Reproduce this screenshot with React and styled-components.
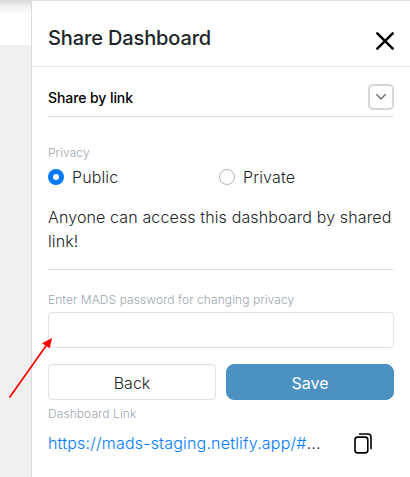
import React from 'react';
import styled, { createGlobalStyle } from 'styled-components';

const GlobalStyle = createGlobalStyle`
  *, *::before, *::after { box-sizing: border-box; }
  body {
    margin: 0;
    overflow: hidden;
    font-family: Inter, 'Liberation Sans', sans-serif;
    font-size: 16px;
    font-weight: 300;
    color: #212529;
  }
`;

const Page = styled.div`
  position: relative;
  display: flex;
  width: 410px;
  height: 477px;
  background: #f0f0f0;
`;

const Backdrop = styled.div`
  width: 31px;
  height: 45px;
  background: linear-gradient(#d9d9d9 0, #ececec 5px, #fafafa 11px, #fff 15px);
`;

const Drawer = styled.aside`
  flex: 1;
  min-width: 0;
  background: #fff;
  border-top: 1px solid #dedede;
  border-left: 1px solid #dcdcdc;
`;

const Header = styled.header`
  display: flex;
  justify-content: space-between;
  height: 66px;
  padding: 22px 15px 0 16px;
  border-bottom: 1px solid #e6e6e6;
`;

const Title = styled.h1`
  margin: 0;
  font-size: 20px;
  line-height: 30px;
  font-weight: 500;
  letter-spacing: -0.13px;
`;

const IconButton = styled.button`
  display: block;
  padding: 0;
  border: 0;
  background: none;
  line-height: 0;
  color: #000;
`;

const CloseButton = styled(IconButton)`
  width: 20px;
  height: 20px;
  margin-top: 8px;
`;

const Content = styled.div`
  padding: 0 16px;
`;

const SectionBar = styled.div`
  display: flex;
  align-items: center;
  justify-content: space-between;
  height: 50px;
  padding-top: 11px;
  border-bottom: 1px solid #dee2e6;
`;

const SectionTitle = styled.h2`
  margin: 2px 0 0;
  font-size: 14px;
  line-height: 20px;
  font-weight: 500;
  letter-spacing: -0.08px;
  color: #000;
`;

const Toggle = styled(IconButton)`
  display: grid;
  place-items: center;
  width: 26px;
  height: 26px;
  margin-bottom: 1px;
  border: 2px solid #d3d8dd;
  border-radius: 5px;
`;

const Label = styled.div`
  font-size: 12px;
  line-height: 18px;
  letter-spacing: 0.08px;
  color: #9ca7b1;
  margin-top: ${({ $top }) => $top || 0}px;
`;

const RadioGroup = styled.div`
  display: grid;
  grid-template-columns: 171px 1fr;
  margin-top: 3px;
`;

const RadioLabel = styled.label`
  display: flex;
  align-items: center;
  gap: 8px;
  line-height: 24px;
  letter-spacing: 0.13px;
`;

const Radio = styled.input`
  appearance: none;
  width: 16px;
  height: 16px;
  margin: 0;
  border: ${({ checked }) => (checked ? '5px solid #007bff' : '1px solid #adb5bd')};
  border-radius: 50%;
  background: #fff;
`;

const Description = styled.p`
  margin: 16px -4px 0 0;
  padding-bottom: 16px;
  line-height: 24px;
  letter-spacing: 0.13px;
`;

const Divider = styled.hr`
  margin: 0;
  border: 0;
  border-top: 1px solid #dfe1e3;
`;

const PasswordInput = styled.input`
  display: block;
  width: 100%;
  height: 36px;
  margin-top: 3px;
  padding: 0 12px;
  border: 1px solid #dee2e6;
  border-radius: 4px;
  background: #fff;
  outline: 0;
`;

const Actions = styled.div`
  display: grid;
  grid-template-columns: 1fr 1fr;
  gap: 10px;
  margin-top: 16px;
`;

const Button = styled.button`
  height: 36px;
  padding: 2px 0 0;
  border: 1px solid ${({ $primary }) => ($primary ? '#4b92c3' : '#dee2e6')};
  border-radius: ${({ $primary }) => ($primary ? 8 : 4)}px;
  background: ${({ $primary }) => ($primary ? '#4b92c3' : '#fff')};
  color: ${({ $primary }) => ($primary ? '#fff' : '#212529')};
  font: ${({ $primary }) => ($primary ? 400 : 300)} 16px Inter, sans-serif;
`;

const LinkRow = styled.div`
  display: flex;
  align-items: center;
  margin-top: 8px;
`;

const LinkText = styled.div`
  width: 306px;
  line-height: 24px;
  letter-spacing: 0.2px;
  white-space: nowrap;
`;

const Anchor = styled.a`
  color: #007bff;
  text-decoration: none;
`;

const Arrow = styled.svg`
  position: absolute;
  left: 0;
  top: 330px;
  pointer-events: none;
`;

export default function App() {
  return (
    <Page>
      <GlobalStyle />
      <Backdrop />
      <Drawer>
        <Header>
          <Title>Share Dashboard</Title>
          <CloseButton aria-label="Close">
            <svg width="20" height="20" viewBox="0 0 20 20" fill="none" stroke="currentColor" strokeWidth="2.5" strokeLinecap="round">
              <path d="M2.3 2.3 17.7 17.7M17.7 2.3 2.3 17.7" />
            </svg>
          </CloseButton>
        </Header>
        <Content>
          <SectionBar>
            <SectionTitle>Share by link</SectionTitle>
            <Toggle aria-label="Toggle section">
              <svg width="12" height="8" viewBox="0 0 12 8" fill="none" stroke="#6f7275" strokeWidth="1.5">
                <path d="m1.3 1.3 4.7 4.7 4.7-4.7" />
              </svg>
            </Toggle>
          </SectionBar>
          <Label $top={27}>Privacy</Label>
          <RadioGroup>
            <RadioLabel><Radio type="radio" name="privacy" checked readOnly />Public</RadioLabel>
            <RadioLabel><Radio type="radio" name="privacy" checked={false} readOnly />Private</RadioLabel>
          </RadioGroup>
          <Description>Anyone can access this dashboard by shared link!</Description>
          <Divider />
          <Label $top={21}>Enter MADS password for changing privacy</Label>
          <PasswordInput type="password" aria-label="Password" />
          <Actions>
            <Button>Back</Button>
            <Button $primary>Save</Button>
          </Actions>
          <Label $top={5}>Dashboard Link</Label>
          <LinkRow>
            <LinkText><Anchor>https://mads-staging.netlify.app/#</Anchor>...</LinkText>
            <IconButton aria-label="Copy link">
              <svg width="18" height="22" viewBox="0 0 18 22" fill="none" stroke="currentColor" strokeWidth="1.6" strokeLinecap="round">
                <rect x="1" y="5.1" width="12.8" height="15.8" rx="2.6" />
                <path d="M5.6 2h8.4a3 3 0 0 1 3 3v11.6" />
              </svg>
            </IconButton>
          </LinkRow>
        </Content>
      </Drawer>
      <Arrow width="60" height="75" viewBox="0 0 60 75">
        <path d="M9.5 67.5 47 14.5" stroke="#f00" strokeWidth="1.7" />
        <path d="M52 8 42 13.3l7.7 5Z" fill="#f00" />
      </Arrow>
    </Page>
  );
}
